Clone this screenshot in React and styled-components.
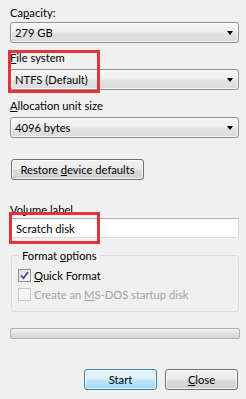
import React from "react";
import styled, { createGlobalStyle } from "styled-components";

const Global = createGlobalStyle`
  html, body { margin: 0; padding: 0; background: #f0f0f0; }
  body { font-family: "Lato", "Open Sans", sans-serif; font-size: 11.2px; color: #000; }
`;

const Dialog = styled.div`
  position: relative;
  width: 246px;
  height: 399px;
  box-sizing: border-box;
  padding: 0 7px 0 10px;
  display: flex;
  flex-direction: column;
  background: #f0f0f0;
  overflow: hidden;
`;

const Label = styled.div`
  height: 15px;
  line-height: 15px;
  margin-top: ${(p) => p.$mt || 0}px;
  white-space: nowrap;
`;

const Select = styled.div`
  margin-top: ${(p) => p.$mt || 0}px;
  height: 21px;
  box-sizing: border-box;
  border: 1px solid #8e8f8f;
  border-radius: 3px;
  background: linear-gradient(#f6f6f6 0%, #eeeeee 48%, #e2e2e2 52%, #dcdcdc 100%);
  box-shadow: inset 0 0 0 1px rgba(255, 255, 255, 0.7);
  display: flex;
  align-items: center;
  justify-content: space-between;
  padding: 0 5px 0 4px;
`;

const Arrow = styled.span`
  width: 0;
  height: 0;
  border-left: 3.5px solid transparent;
  border-right: 3.5px solid transparent;
  border-top: 4px solid #000;
  margin-top: 1px;
`;

const Button = styled.button`
  font: inherit;
  color: #000;
  height: 21px;
  width: ${(p) => p.$w}px;
  margin: 0;
  padding: 0;
  box-sizing: border-box;
  border-radius: 3px;
  border: 1px solid ${(p) => (p.$default ? "#3c7fb1" : "#707070")};
  background: ${(p) =>
    p.$default
      ? "linear-gradient(#eaf6fd 0%, #d9f0fc 48%, #bee6fd 52%, #a7d9f5 100%)"
      : "linear-gradient(#f2f2f2 0%, #ebebeb 48%, #dddddd 52%, #cfcfcf 100%)"};
  box-shadow: inset 0 0 0 1px rgba(255, 255, 255, 0.75);
`;

const RestoreRow = styled.div`
  margin-top: 21px;
  padding-left: 1px;
`;

const TextInput = styled.div`
  margin-top: 1px;
  margin-left: 1px;
  height: 20px;
  box-sizing: border-box;
  border: 1px solid #dcdcdc;
  border-top-color: #abadb3;
  background: #fff;
  padding-left: 4px;
  display: flex;
  align-items: center;
`;

const Group = styled.fieldset`
  margin: 10px 0 0 1px;
  padding: 5px 0 0 6px;
  height: 64px;
  box-sizing: border-box;
  border: 1px solid #d5dfe5;
  border-radius: 3px;
  display: flex;
  flex-direction: column;
  gap: 4px;
`;

const Legend = styled.legend`
  padding: 0 2px 0 2px;
  margin-left: 2px;
  line-height: 15px;
`;

const CheckRow = styled.div`
  display: flex;
  align-items: center;
  gap: 3px;
  height: 15px;
  color: ${(p) => (p.$disabled ? "#a3a3a3" : "#000")};
`;

const Box = styled.span`
  width: 13px;
  height: 13px;
  box-sizing: border-box;
  border: 1px solid ${(p) => (p.$disabled ? "#c8c8c8" : "#8f8f8f")};
  background: ${(p) =>
    p.$disabled ? "#f4f4f4" : "linear-gradient(135deg, #dcdcdc, #fafafa)"};
  display: flex;
  align-items: center;
  justify-content: center;
`;

const Progress = styled.div`
  margin-top: 16px;
  height: 11px;
  box-sizing: border-box;
  border: 1px solid #b2b2b2;
  border-radius: 2px;
  background: linear-gradient(#f3f3f3, #e2e2e2 50%, #d6d6d6);
  margin-right: -1px;
`;

const Footer = styled.div`
  margin-top: 30px;
  display: flex;
  justify-content: flex-end;
  gap: 8px;
  padding-right: 1px;
`;

const Mark = styled.div`
  position: absolute;
  left: ${(p) => p.$x}px;
  top: ${(p) => p.$y}px;
  width: ${(p) => p.$w}px;
  height: ${(p) => p.$h}px;
  box-sizing: border-box;
  border: 3px solid #e3343b;
  pointer-events: none;
`;

const U = styled.span`
  text-decoration: underline;
  text-underline-offset: 1px;
`;

const Check = () => (
  <svg width="9" height="9" viewBox="0 0 9 9">
    <path d="M1 4.5 L3.5 7.2 L8 1" fill="none" stroke="#39508a" strokeWidth="1.8" />
  </svg>
);

export default function App() {
  return (
    <>
      <Global />
      <Dialog>
        <Label $mt={5}>
          Ca<U>p</U>acity:
        </Label>
        <Select $mt={2}>
          <span>279 GB</span>
          <Arrow />
        </Select>
        <Label $mt={7}>
          <U>F</U>ile system
        </Label>
        <Select $mt={4}>
          <span>NTFS (Default)</span>
          <Arrow />
        </Select>
        <Label $mt={8}>
          <U>A</U>llocation unit size
        </Label>
        <Select $mt={4}>
          <span>4096 bytes</span>
          <Arrow />
        </Select>
        <RestoreRow>
          <Button $w={133}>
            Restore <U>d</U>evice defaults
          </Button>
        </RestoreRow>
        <Label $mt={22}>
          Vo<U>l</U>ume label
        </Label>
        <TextInput>Scratch disk</TextInput>
        <Group>
          <Legend>
            Format <U>o</U>ptions
          </Legend>
          <CheckRow>
            <Box>
              <Check />
            </Box>
            <span>
              <U>Q</U>uick Format
            </span>
          </CheckRow>
          <CheckRow $disabled>
            <Box $disabled />
            <span>
              Create an <U>M</U>S-DOS startup disk
            </span>
          </CheckRow>
        </Group>
        <Progress />
        <Footer>
          <Button $w={73} $default>
            Start
          </Button>
          <Button $w={73}>
            <U>C</U>lose
          </Button>
        </Footer>
        <Mark $x={8} $y={50} $w={92} $h={43} />
        <Mark $x={9} $y={212} $w={91} $h={32} />
      </Dialog>
    </>
  );
}
